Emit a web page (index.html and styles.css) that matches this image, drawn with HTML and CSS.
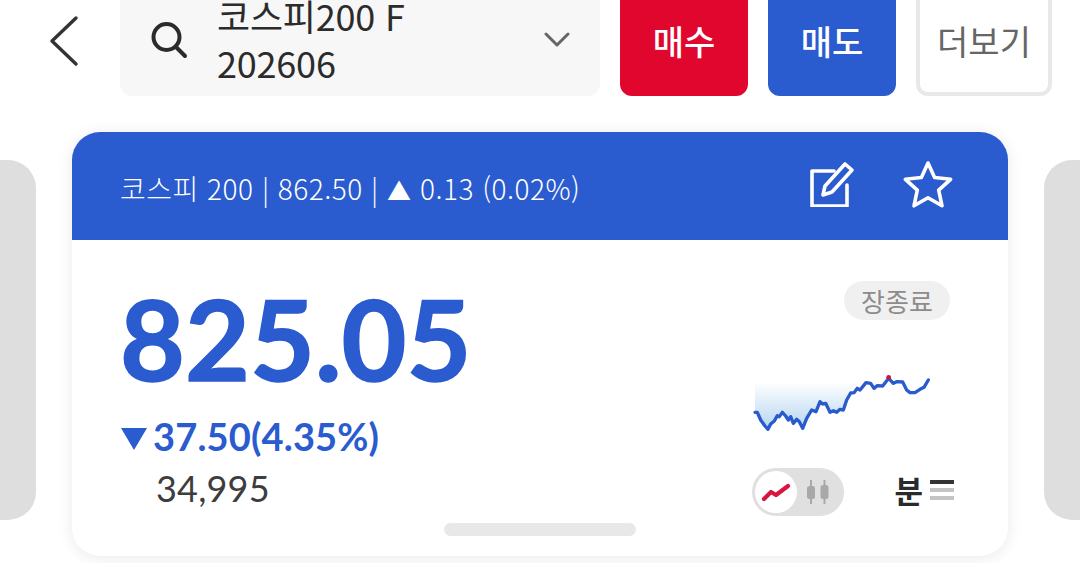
FILE: index.html
```html
<!doctype html>
<html lang="ko">
<head>
    <meta charset="UTF-8">
    <title>코스피200 F 202606</title>
    <link rel="stylesheet" href="styles.css">
</head>
<body>
    <div class="topbar">
        <button class="back">
            <svg width="30" height="52" viewBox="0 0 30 52"><path d="M27 3 3 26l24 23" fill="none" stroke="#333" stroke-width="3.4" stroke-linecap="round" stroke-linejoin="round"/></svg>
        </button>
        <div class="search">
            <svg class="search-icon" width="38" height="38" viewBox="0 0 38 38"><circle cx="16.500" cy="16" r="13" fill="none" stroke="#2b2b2b" stroke-width="4"/><path d="M26 26l9 9" stroke="#2b2b2b" stroke-width="4" stroke-linecap="round"/></svg>
            <div class="search-text">코스피200 F<br>202606</div>
            <svg class="search-arrow" width="26" height="16" viewBox="0 0 26 16"><path d="M2 2l11 11L24 2" fill="none" stroke="#666" stroke-width="3" stroke-linecap="round" stroke-linejoin="round"/></svg>
        </div>
        <div class="btn btn-buy">매수</div>
        <div class="btn btn-sell">매도</div>
        <div class="btn btn-more">더보기</div>
    </div>

    <div class="slider">
        <div class="side side-left"></div>
        <div class="card">
            <div class="card-head">
                <div class="index-info">코스피 200 | 862.50 | <span class="tri-up">▲</span> 0.13 (0.02%)</div>
                <div class="head-icons">
                    <svg width="46" height="46" viewBox="0 0 46 46"><path d="M25 10H3v35h35V24" fill="none" stroke="#fff" stroke-width="3.600" stroke-linejoin="round" stroke-linecap="round"/><path d="M14 34l2-9L36 3l7 6-20 22z" fill="none" stroke="#fff" stroke-width="3.600" stroke-linejoin="round"/></svg>
                    <svg width="50" height="48" viewBox="0 0 50 48"><path d="M25 3l6.600 14.500 16 1.800-11.900 10.800 3.300 15.700L25 37.800 11 45.800l3.300-15.700L2.400 19.300l16-1.800z" fill="none" stroke="#fff" stroke-width="3.600" stroke-linejoin="round"/></svg>
                </div>
            </div>
            <div class="card-body">
                <div class="quote">
                    <div class="quote-left">
                        <div class="price">825.05</div>
                        <div class="change"><span class="tri-down"></span>37.50(4.35%)</div>
                        <div class="volume">34,995</div>
                    </div>
                    <div class="quote-right">
                        <div class="status">장종료</div>
                        <svg class="spark" width="210" height="80" viewBox="0 0 630 240">
                            <defs>
                                <linearGradient id="sparkFill" x1="0" y1="0" x2="0" y2="1">
                                    <stop offset="0" stop-color="#ffffff"/>
                                    <stop offset="1" stop-color="#b4d5f0"/>
                                </linearGradient>
                            </defs>
                            <path d="M45 66H345L320 120 310 150 300 148 290 157 280 152 270 157 257 130 248 132 240 125 228 155 215 150 200 175 188 205 178 185 170 178 160 190 152 170 145 180 137 168 127 157 118 170 112 167 103 183 92 192 84 208 75 198 62 180 52 157 45 157Z" fill="url(#sparkFill)"/>
                            <path d="M45 157 52 157 62 180 75 198 84 208 92 192 103 183 112 167 118 170 127 157 137 168 145 180 152 170 160 190 170 178 178 185 188 205 200 175 215 150 228 155 240 125 248 132 257 130 270 157 280 152 290 157 300 148 310 150 320 120 332 99 342 98 352 85 360 90 378 68 392 70 402 85 412 77 428 78 446 55 460 70 470 65 488 66 500 90 510 98 525 98 540 88 552 82 565 60" fill="none" stroke="#2a5bcc" stroke-width="10" stroke-linejoin="round" stroke-linecap="round"/>
                            <circle cx="446" cy="52" r="7" fill="#d1103c"/>
                        </svg>
                        <div class="controls">
                            <div class="toggle">
                                <div class="knob">
                                    <svg width="30" height="20" viewBox="0 0 30 20"><path d="M3 17l7-7 5 3L27 4" fill="none" stroke="#d9143f" stroke-width="4.200" stroke-linejoin="round" stroke-linecap="round"/></svg>
                                </div>
                                <svg class="candles" width="24" height="26" viewBox="0 0 24 26"><path d="M5 1v24M18.500 1v24" stroke="#a8a8a8" stroke-width="2"/><rect x="1" y="7" width="8" height="13" rx="2.500" fill="#a8a8a8"/><rect x="14.500" y="6" width="8" height="14" rx="2.500" fill="#a8a8a8"/></svg>
                            </div>
                            <div class="period">
                                <span>분</span>
                                <div class="period-lines"><i class="line-dark"></i><i></i><i></i></div>
                            </div>
                        </div>
                    </div>
                </div>
                <div class="handle"></div>
            </div>
        </div>
        <div class="side side-right"></div>
    </div>
</body>
</html>
```

FILE: styles.css
```css
*{
    margin: 0;
    padding: 0;
    box-sizing: border-box;
}
html,body{
    height: 100%;
    overflow: hidden;
}
body{
    background: #fff;
    font-family: "Noto Sans CJK KR", "Noto Sans", sans-serif;
    color: #2b2b2b;
}
.topbar{
    display: flex;
    height: 112px;
    margin-top: -16px;
    padding-left: 49px;
}
.back{
    width: 71px;
    background: none;
    border: 0;
    display: flex;
    align-items: center;
    padding-top: 2px;
}
.search{
    width: 480px;
    background: #f7f7f7;
    border-radius: 12px;
    display: flex;
    align-items: center;
    padding: 0 30px;
}
.search-icon{
    flex: none;
}
.search-text{
    flex: 1;
    margin-left: 29px;
    margin-bottom: 2px;
    font-size: 36px;
    line-height: 47px;
    letter-spacing: -0.2px;
    color: #2b2b2b;
}
.btn{
    width: 128px;
    margin-left: 20px;
    border-radius: 12px;
    display: flex;
    align-items: center;
    justify-content: center;
    font-size: 34px;
    font-weight: 500;
    color: #fff;
}
.btn-buy{
    background: #e0062e;
}
.btn-sell{
    background: #2a5bcf;
}
.btn-more{
    width: 136px;
    background: #fff;
    border: 4px solid #e8e8e8;
    color: #666;
    font-weight: 400;
}
.slider{
    display: flex;
    justify-content: space-between;
    margin-top: 36px;
}
.side{
    width: 36px;
    height: 360px;
    margin-top: 28px;
    background: #dedede;
}
.side-left{
    border-radius: 0 28px 28px 0;
}
.side-right{
    border-radius: 28px 0 0 28px;
}
.card{
    width: 936px;
    height: 424px;
    border-radius: 28px;
    background: #fff;
    box-shadow: 0 2px 16px rgba(0,0,0,0.09);
}
.card-head{
    height: 108px;
    background: #2a5bcf;
    border-radius: 28px 28px 0 0;
    display: flex;
    align-items: center;
    justify-content: space-between;
    padding: 0 55px 0 48px;
    color: #fff;
}
.index-info{
    margin-top: 4px;
    font-size: 28px;
    font-weight: 300;
    letter-spacing: 0.5px;
}
.tri-up{
    font-size: 24px;
}
.head-icons{
    display: flex;
    align-items: center;
    gap: 48px;
    margin-top: -4px;
}
.card-body{
    height: 316px;
    display: flex;
    flex-direction: column;
    align-items: center;
}
.quote{
    width: 100%;
    height: 283px;
    display: flex;
    justify-content: space-between;
    padding: 41px 58px 0 48px;
}
.price{
    font-family: Lato, "Noto Sans", sans-serif;
    font-size: 112px;
    font-weight: 700;
    line-height: 120px;
    margin-top: -3px;
    color: #2a5bcf;
    -webkit-text-stroke: 1.5px #2a5bcf;
}
.change{
    display: flex;
    align-items: center;
    margin-top: 15px;
    font-family: Lato, "Noto Sans", sans-serif;
    font-size: 38px;
    font-weight: 700;
    line-height: 46px;
    letter-spacing: 0.15px;
    color: #2a5bcf;
}
.tri-down{
    width: 0;
    height: 0;
    margin: 6px 6px 0 1px;
    border-left: 13px solid transparent;
    border-right: 13px solid transparent;
    border-top: 22px solid #2a5bcf;
}
.volume{
    margin: 7px 0 0 36px;
    font-family: Lato, "Noto Sans", sans-serif;
    font-size: 36px;
    line-height: 44px;
    letter-spacing: 0.2px;
    color: #3d3d3d;
}
.quote-right{
    width: 198px;
    display: flex;
    flex-direction: column;
}
.status{
    align-self: flex-end;
    width: 106px;
    height: 39px;
    border-radius: 20px;
    background: #f0f0f0;
    color: #8c8c8c;
    font-size: 26px;
    font-weight: 400;
    line-height: 39px;
    text-align: center;
}
.spark{
    display: block;
    margin: 40px 0 0 -12px;
}
.controls{
    display: flex;
    align-items: center;
    justify-content: space-between;
    margin-top: 28px;
    margin-right: -4px;
}
.toggle{
    width: 92px;
    height: 48px;
    border-radius: 24px;
    background: #e0e0e0;
    display: flex;
    align-items: center;
    padding-left: 3px;
}
.knob{
    width: 42px;
    height: 42px;
    border-radius: 50%;
    background: #fff;
    display: flex;
    align-items: center;
    justify-content: center;
}
.candles{
    margin-left: 9px;
}
.period{
    display: flex;
    align-items: center;
    gap: 7px;
    font-size: 31px;
    font-weight: 700;
    line-height: 40px;
    margin-top: -4px;
    color: #2b2b2b;
}
.period-lines{
    width: 24px;
    display: flex;
    flex-direction: column;
    gap: 4px;
}
.period-lines i{
    display: block;
    height: 4px;
    background: #c4c4c4;
}
.period-lines .line-dark{
    background: #333;
}
.handle{
    width: 192px;
    height: 13px;
    border-radius: 7px;
    background: #e8e8e8;
}
```
